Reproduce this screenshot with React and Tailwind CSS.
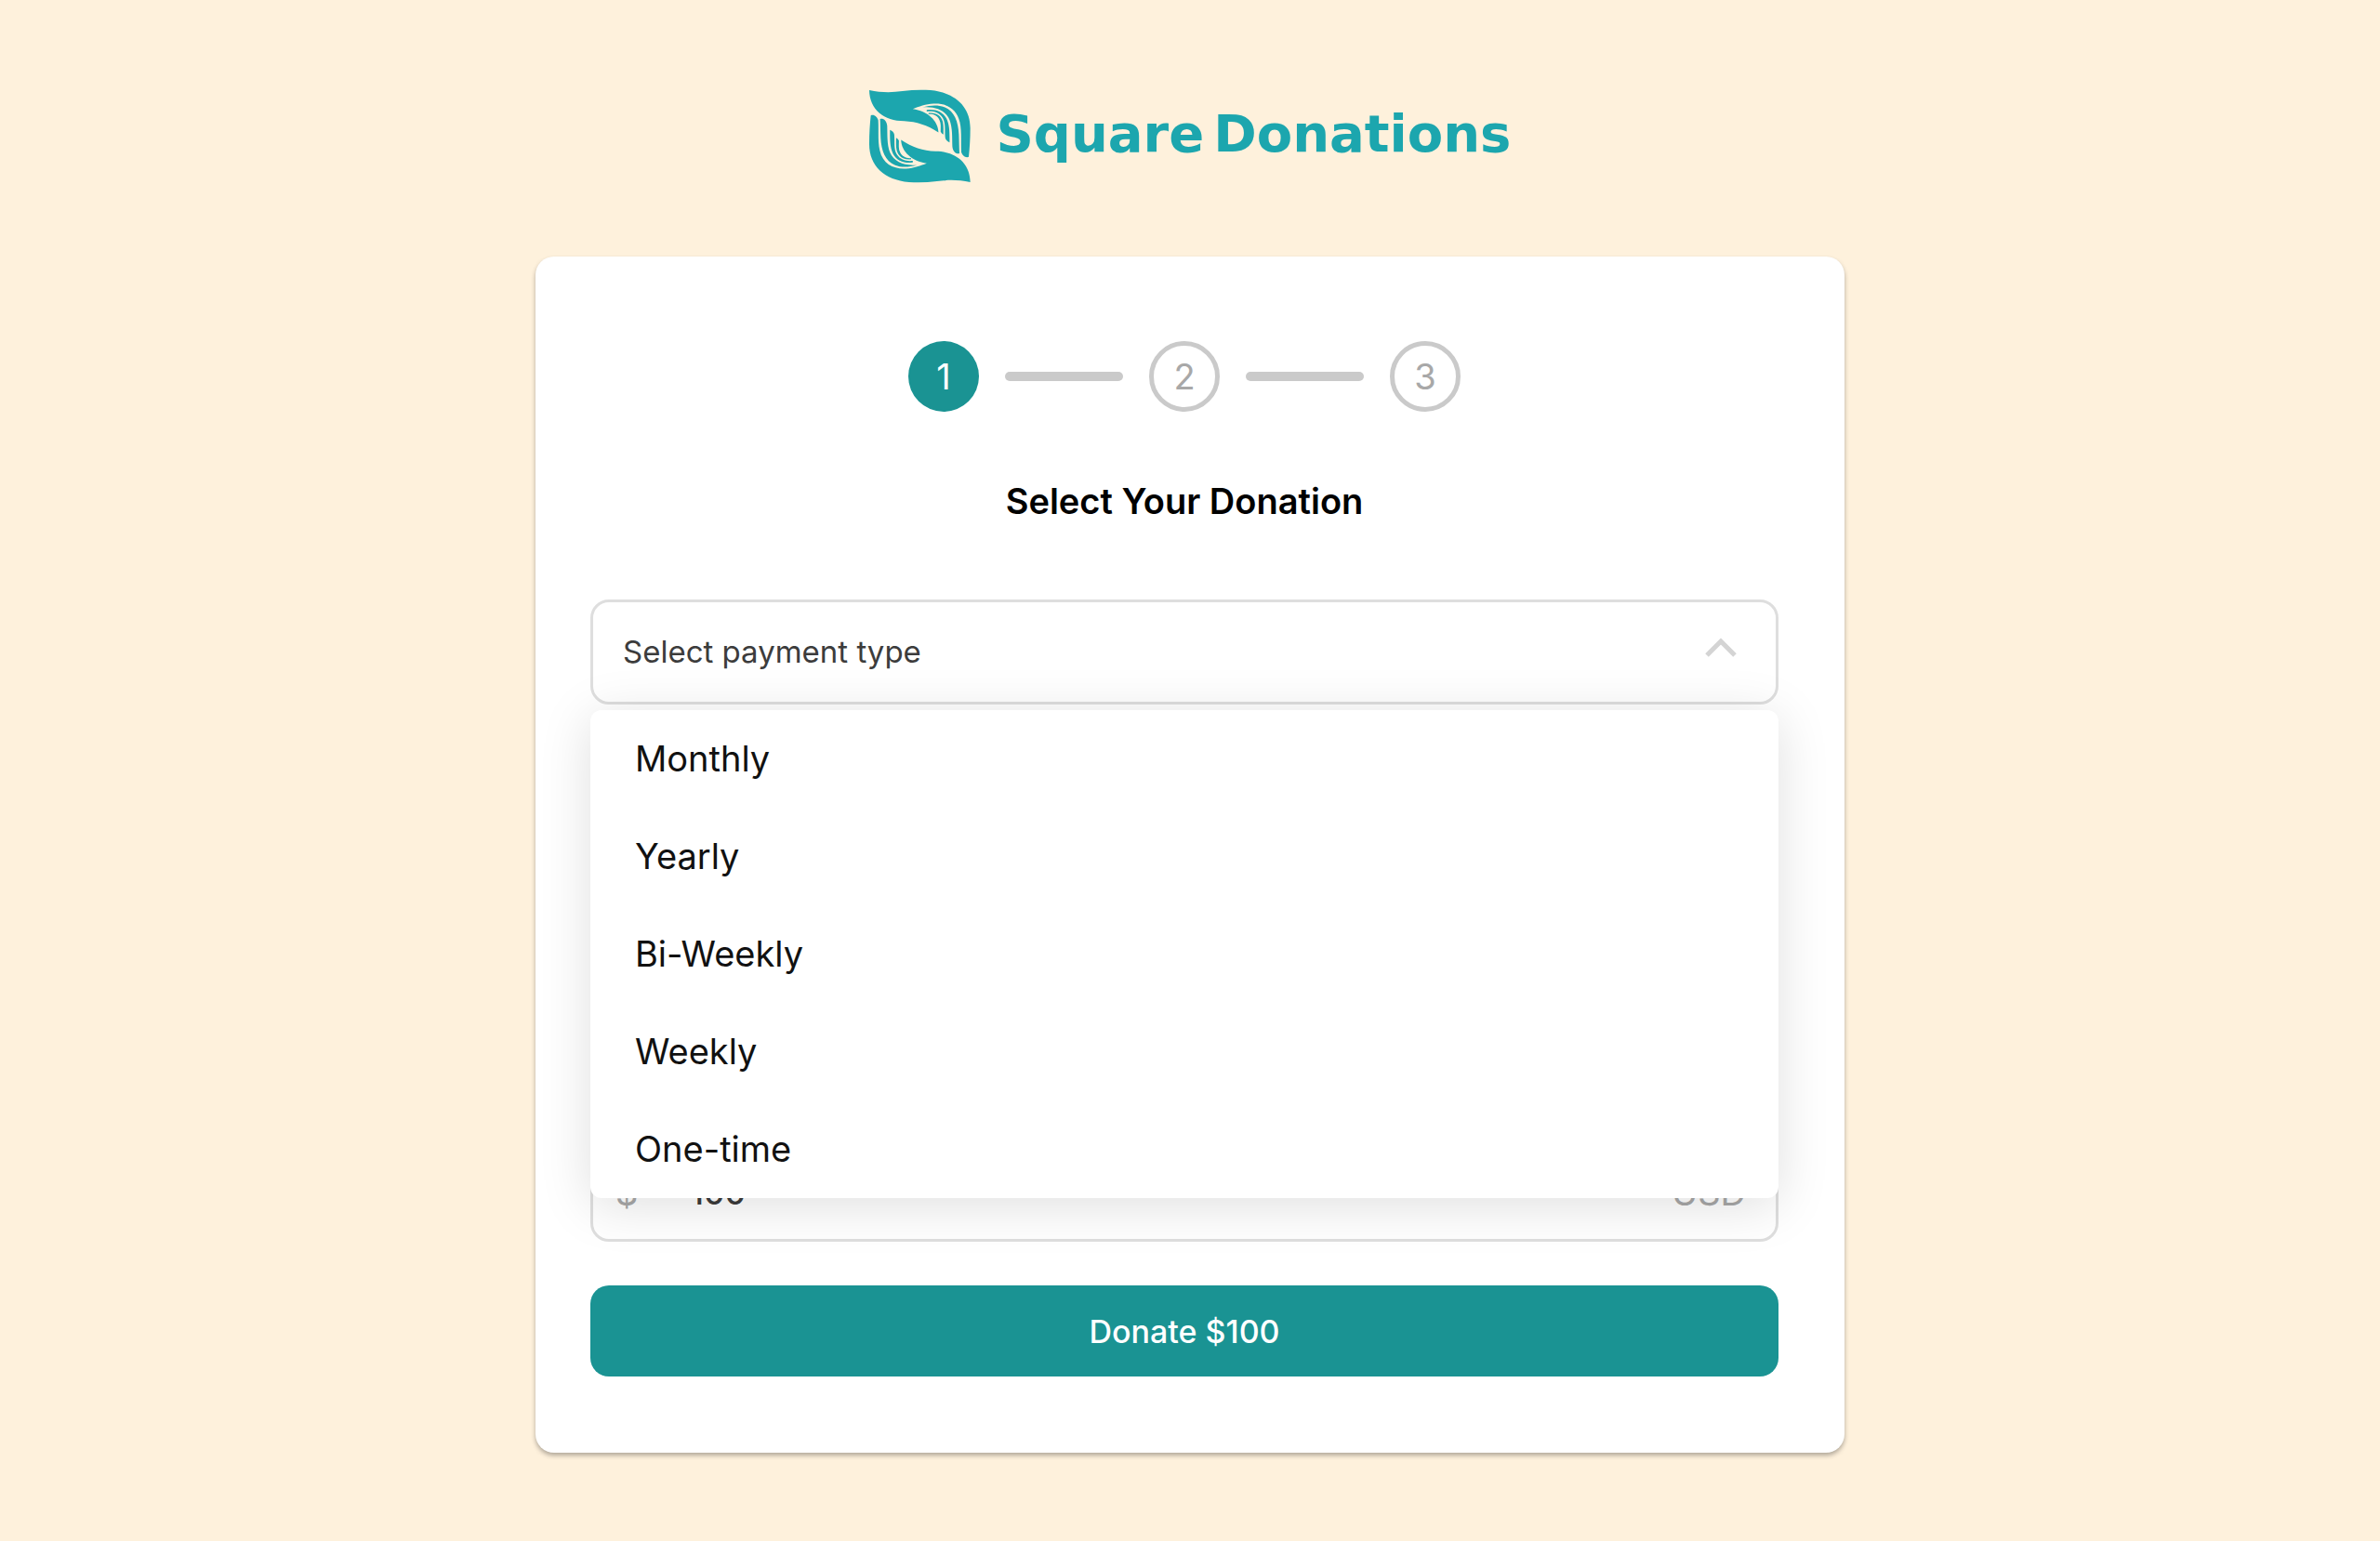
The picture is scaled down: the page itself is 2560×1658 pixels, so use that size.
import React, { useState } from 'react';

const STEPS = [1, 2, 3];
const PAYMENT_TYPES = ['Monthly', 'Yearly', 'Bi-Weekly', 'Weekly', 'One-time'];

// One hand; the logo is this shape plus its half-turn copy
function Hand() {
  return (
    <>
      <path d="M102 82C140 90 175 90 210 85C240 81 270 80 300 82C380 90 429 135 429 205C429 240 427 270 424 298C414 303 403 293 400 283C398 250 402 215 395 185C385 140 350 124 310 126C285 127 262 136 243 143C290 150 325 180 326 219C290 195 255 184 215 182C150 182 103 145 102 82Z" />
      <path d="M274 138C300 130 325 129 345 137C378 150 390 185 392 225C393 250 393 270 394 287C383 290 373 282 371 265C370 235 372 205 362 178C348 147 315 134 274 138Z" />
      <path d="M288 146C315 142 340 151 352 174C363 196 362 225 362 251C354 248 349 242 348 236C346 210 350 190 340 172C328 153 308 149 288 151Z" />
      <path d="M294 156C318 153 334 164 340 184C343 198 342 212 342 226C338 224 335 221 333 217C333 202 335 190 329 178C322 164 310 159 294 160Z" />
    </>
  );
}

function Logo() {
  return (
    <svg viewBox="102 80 328 302" className="h-[101px] w-[109px] fill-[#1ca6ae]" aria-hidden="true">
      <Hand />
      <g transform="rotate(180 265.5 231)">
        <Hand />
      </g>
    </svg>
  );
}

function Steps({ current }) {
  return (
    <ol className="flex items-center justify-center gap-7">
      {STEPS.map((step) => (
        <React.Fragment key={step}>
          {step > 1 && <li aria-hidden="true" className="h-2.5 w-[127px] rounded-full bg-[#cacaca]" />}
          <li
            aria-current={step === current ? 'step' : undefined}
            className={
              step === current
                ? 'flex size-[76px] items-center justify-center rounded-full bg-[#1a9393] text-[38px] text-white'
                : 'flex size-[76px] items-center justify-center rounded-full border-5 border-[#cacaca] text-[38px] text-[#a8a8a8]'
            }
          >
            {step}
          </li>
        </React.Fragment>
      ))}
    </ol>
  );
}

function PaymentType() {
  const [open, setOpen] = useState(true);
  const [value, setValue] = useState('');

  return (
    <div className="relative">
      <button
        type="button"
        aria-haspopup="listbox"
        aria-expanded={open}
        onClick={() => setOpen(!open)}
        className="flex h-[113px] w-full items-center justify-between rounded-[20px] border-3 border-[#dedede] bg-white pr-[42px] pl-8 text-left text-[33px] text-[#3c3c3c]"
      >
        {value || 'Select payment type'}
        <svg viewBox="0 0 34 22" className="mb-2.5 h-[22px] w-[34px]" fill="none" stroke="#d4d4d4" strokeWidth="5" aria-hidden="true">
          <path d="M2 19L17 4L32 19" />
        </svg>
      </button>

      {open && (
        <ul
          role="listbox"
          aria-label="Payment type"
          className="absolute top-full right-0 left-0 z-10 mt-1.5 rounded-xl bg-white text-[38px] text-[#111] shadow-[0_8px_56px_rgba(0,0,0,0.13)]"
        >
          {PAYMENT_TYPES.map((type) => (
            <li
              key={type}
              role="option"
              aria-selected={type === value}
              onClick={() => {
                setValue(type);
                setOpen(false);
              }}
              className="flex h-[105px] cursor-pointer items-center px-12"
            >
              {type}
            </li>
          ))}
        </ul>
      )}
    </div>
  );
}

export default function App() {
  const [amount, setAmount] = useState('100');

  return (
    <div className="min-h-screen bg-[#fef1dc] px-8 pt-24 pb-24 font-['Inter',sans-serif]">
      <header className="flex items-center justify-center gap-7">
        <Logo />
        <h1 className="flex gap-2.5 pb-1.5 font-['DejaVu_Sans',sans-serif] text-[56px] leading-[80px] font-bold text-[#1ca6ae]">
          <span>Square</span>
          <span>Donations</span>
        </h1>
      </header>

      <main className="mx-auto mt-[79px] w-full max-w-[1408px] rounded-[20px] bg-white pt-[91px] pr-[71px] pb-[82px] pl-[59px] shadow-[0_3px_5px_rgba(0,0,0,0.3)]">
        <Steps current={1} />
        <h2 className="mt-[68px] mb-[78px] text-center text-[38px] leading-[56px] font-semibold text-black">
          Select Your Donation
        </h2>

        <form onSubmit={(e) => e.preventDefault()}>
          <PaymentType />

          <label className="mt-[465px] flex h-[113px] items-center rounded-[20px] border-3 border-[#dedede] px-6 pt-2 text-[38px] text-[#a8a8a8]">
            <span>$</span>
            <input
              type="text"
              inputMode="decimal"
              aria-label="Donation amount"
              value={amount}
              onChange={(e) => setAmount(e.target.value)}
              className="ml-14 min-w-0 flex-1 text-[35px] font-medium text-[#3c3c3c] outline-none"
            />
            <span className="pr-2">USD</span>
          </label>

          <button
            type="submit"
            className="mt-[47px] h-[98px] w-full rounded-[20px] bg-[#1a9393] text-[34px] font-medium text-white"
          >
            Donate ${amount}
          </button>
        </form>
      </main>
    </div>
  );
}
